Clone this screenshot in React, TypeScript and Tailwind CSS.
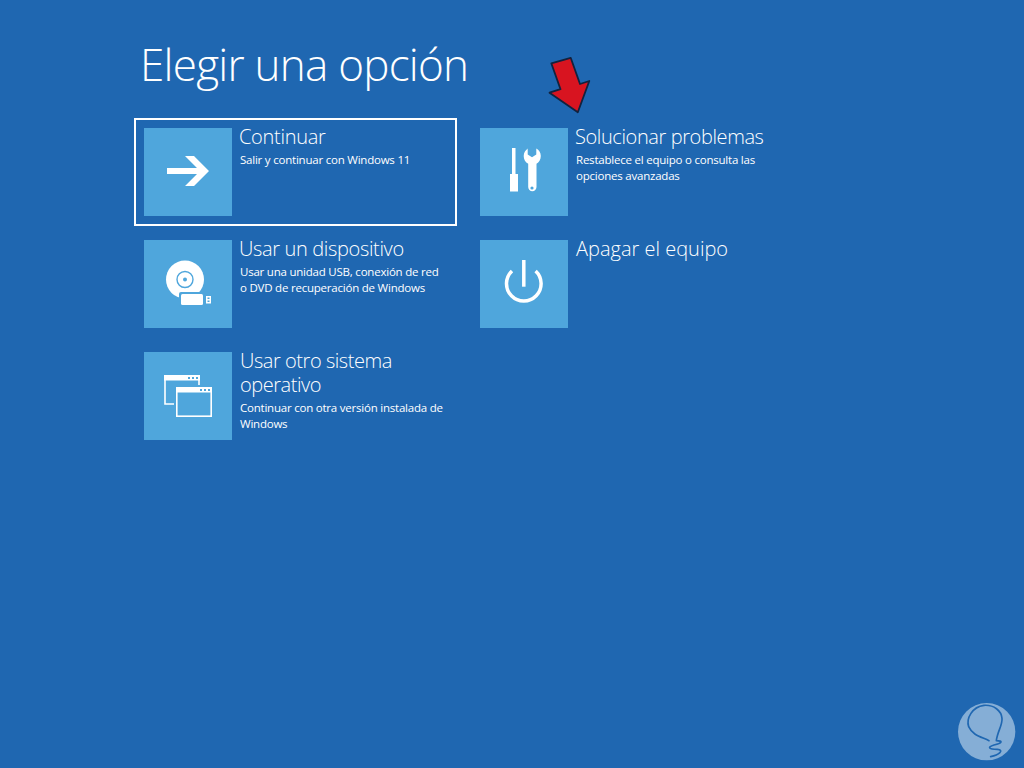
const Arrow = () => (
  <svg viewBox="0 0 88 88" className="w-[88px] h-[88px]" fill="#fff">
    <path d="M23 40h30L41 28h9l15 15-15 15h-9l12-12H23z" />
  </svg>
);
const Device = () => (
  <svg viewBox="0 0 88 88" className="w-[88px] h-[88px]">
    <circle cx="41" cy="39.5" r="19" fill="#fff" />
    <circle cx="41" cy="39.5" r="8" fill="none" stroke="#4fa6dc" strokeWidth="1.4" />
    <circle cx="41" cy="39.5" r="2" fill="#4fa6dc" />
    <rect x="35" y="52" width="26" height="15" rx="2" fill="#4fa6dc" />
    <rect x="37" y="54" width="22" height="11" rx="1.5" fill="#fff" />
    <rect x="62" y="56" width="5" height="7.5" fill="#fff" />
    <rect x="63.5" y="57.5" width="2" height="1.5" fill="#4fa6dc" />
    <rect x="63.5" y="60.5" width="2" height="1.5" fill="#4fa6dc" />
  </svg>
);
const Tools = () => (
  <svg viewBox="0 0 88 88" className="w-[88px] h-[88px]" fill="#fff">
    <path d="M32 20h3.500v26H38v17.500h-8V46h2z" />
    <path d="M47.700 20.500v6l4.300 2.700 4.300-2.700v-6c2.700 1.300 4.500 4 4.500 7.500 0 3.500-1.800 6.500-4.300 7.800V59a4.150 4.150 0 0 1-8.300 0V35.800c-2.700-1.300-4.500-4.300-4.500-7.800 0-3.500 1.800-6.200 4.500-7.500z" />
    <circle cx="52" cy="60" r="1.600" fill="#4fa6dc" />
  </svg>
);
const Windows = () => (
  <svg viewBox="0 0 88 88" className="w-[88px] h-[88px]">
    <path d="M30 52H21V24h34v9" fill="none" stroke="#fff" strokeWidth="1.600" />
    <rect x="20" y="23" width="36" height="5.500" fill="#fff" />
    <rect x="32.800" y="35.800" width="34.400" height="28.400" fill="none" stroke="#fff" strokeWidth="1.600" />
    <rect x="32" y="35" width="36" height="5.500" fill="#fff" />
    {[44, 48, 52].map((x) => <rect key={x} x={x} y="25" width="2" height="2" fill="#4fa6dc" />)}
    {[56, 60, 64].map((x) => <rect key={x} x={x} y="37" width="2" height="2" fill="#4fa6dc" />)}
  </svg>
);
const Power = () => (
  <svg viewBox="0 0 88 88" className="w-[88px] h-[88px]" fill="none" stroke="#fff" strokeWidth="3.500">
    <path d="M43.800 20v26.700" />
    <path d="M32 31a17.300 17.300 0 1 0 23.600 0" />
  </svg>
);

type Item = {
  icon: React.ReactNode;
  title: React.ReactNode;
  desc?: React.ReactNode;
  selected?: boolean;
  titleClass: string;
};

const Option = ({ icon, title, desc, selected, titleClass }: Item) => (
  <div className={`flex w-[323px] h-[108px] border-2 p-2 ${selected ? "border-white" : "border-transparent"}`}>
    <div className="w-[88px] h-[88px] shrink-0 bg-[#4fa6dc]">{icon}</div>
    <div className="pl-2 text-white whitespace-nowrap">
      <div className={`text-[20px] leading-[24px] font-light -mt-[3px] ${titleClass}`}>{title}</div>
      {desc && <div className="text-[11.5px] leading-[16px] mt-[3px] tracking-[-0.22px]">{desc}</div>}
    </div>
  </div>
);

export default function App() {
  return (
    <div
      className="relative w-[1024px] h-[768px] overflow-hidden bg-[#1f67b1] pl-[134px]"
      style={{ fontFamily: '"Open Sans", "Noto Sans", sans-serif' }}
    >
      <h1 className="pt-[34px] pl-[6px] h-[118px] text-[44px] leading-[60px] font-light text-white tracking-[-0.75px]">
        Elegir una opción
      </h1>
      <div className="flex gap-[13px]">
        <div className="flex flex-col gap-1">
          <Option
            selected
            icon={<Arrow />}
            title="Continuar"
            desc="Salir y continuar con Windows 11"
            titleClass="-ml-px tracking-[-0.3px]"
          />
          <Option
            icon={<Device />}
            title="Usar un dispositivo"
            desc={<>Usar una unidad USB, conexión de red<br />o DVD de recuperación de Windows</>}
            titleClass="-ml-px tracking-[-0.35px]"
          />
          <Option
            icon={<Windows />}
            title={<>Usar otro sistema<br />operativo</>}
            desc={<>Continuar con otra versión instalada de<br />Windows</>}
            titleClass="tracking-[-0.45px]"
          />
        </div>
        <div className="flex flex-col gap-1">
          <Option
            icon={<Tools />}
            title="Solucionar problemas"
            desc={<>Restablece el equipo o consulta las<br />opciones avanzadas</>}
            titleClass="-ml-px tracking-[-0.4px]"
          />
          <Option icon={<Power />} title="Apagar el equipo" titleClass="tracking-[0px]" />
        </div>
      </div>

      <svg className="absolute left-[540px] top-[50px] w-[60px] h-[70px]" viewBox="540 50 60 70">
        <path
          d="M551.300 63.300L570.700 57.800L580 84L589.300 81L577.800 112.300L549.500 92.700L560.500 89.200Z"
          fill="#d81420"
          stroke="#12233f"
          strokeWidth="1.800"
          strokeLinejoin="round"
        />
      </svg>

      <svg className="absolute left-[944px] top-[690px] w-[80px] h-[78px]" viewBox="0 0 240 234">
        <circle cx="128" cy="125" r="86" fill="#85aed6" />
        <path
          d="M135 152C110 140 85 135 74 110C66 85 85 50 120 46C150 44 172 62 174 85C176 105 160 125 157 152C178 152 175 160 150 165C128 172 135 178 160 178C182 180 165 195 140 200"
          fill="none"
          stroke="#1f67b1"
          strokeWidth="5"
          strokeLinecap="round"
          strokeLinejoin="round"
        />
      </svg>
    </div>
  );
}
